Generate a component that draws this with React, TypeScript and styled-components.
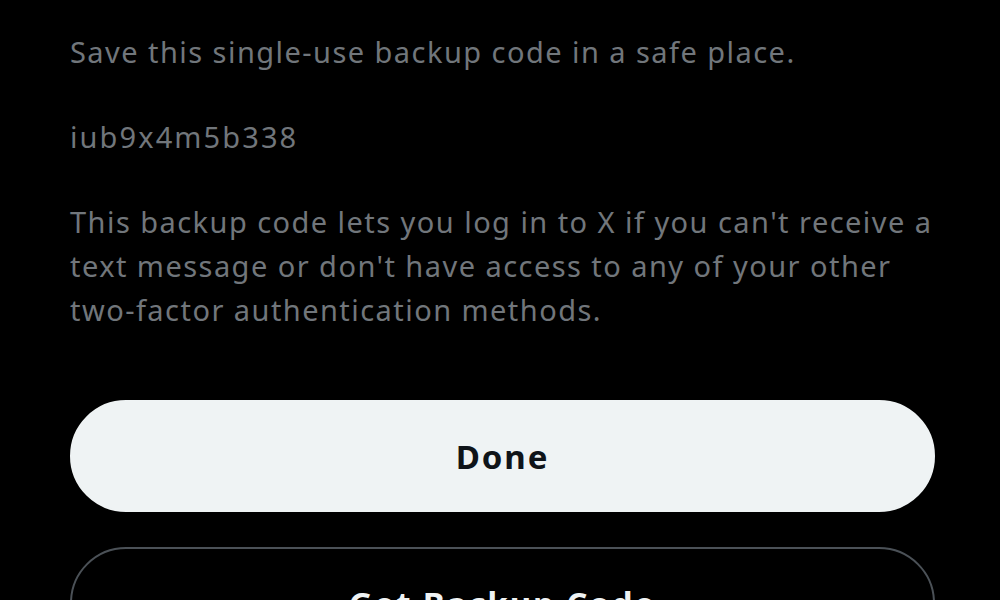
import styled, { createGlobalStyle } from "styled-components";

const GlobalStyle = createGlobalStyle`
  html, body {
    margin: 0;
    padding: 0;
    background: #000;
    overflow: hidden;
  }
`;

const Page = styled.div`
  width: 1000px;
  height: 600px;
  background: #000;
  box-sizing: border-box;
  padding: 30px 65px 0 70px;
  font-family: "Noto Sans", "Open Sans", sans-serif;
  overflow: hidden;
`;

const Text = styled.p<{ $gap?: number; $spacing?: number }>`
  margin: 0 0 ${(p) => p.$gap ?? 0}px;
  color: #71767b;
  font-size: 29px;
  line-height: 44px;
  letter-spacing: ${(p) => p.$spacing ?? 1.45}px;
`;

const Actions = styled.div`
  display: flex;
  flex-direction: column;
  gap: 35px;
  margin-top: 68px;
`;

const Button = styled.button<{ $primary?: boolean }>`
  height: 112px;
  width: 100%;
  border-radius: 56px;
  font-family: inherit;
  font-size: 33px;
  font-weight: 700;
  letter-spacing: 1.9px;
  cursor: pointer;
  background: ${(p) => (p.$primary ? "#eff3f4" : "#000")};
  color: ${(p) => (p.$primary ? "#0f1419" : "#eff3f4")};
  border: 2px solid ${(p) => (p.$primary ? "#eff3f4" : "#4b5157")};
`;

export default function App() {
  return (
    <>
      <GlobalStyle />
      <Page>
        <Text $gap={41}>Save this single-use backup code in a safe place.</Text>
        <Text $gap={41} $spacing={2.1}>
          iub9x4m5b338
        </Text>
        <Text>
          This backup code lets you log in to X if you can't receive a text
          message or don't have access to any of your other two-factor
          authentication methods.
        </Text>
        <Actions>
          <Button $primary>Done</Button>
          <Button>Get Backup Code</Button>
        </Actions>
      </Page>
    </>
  );
}
